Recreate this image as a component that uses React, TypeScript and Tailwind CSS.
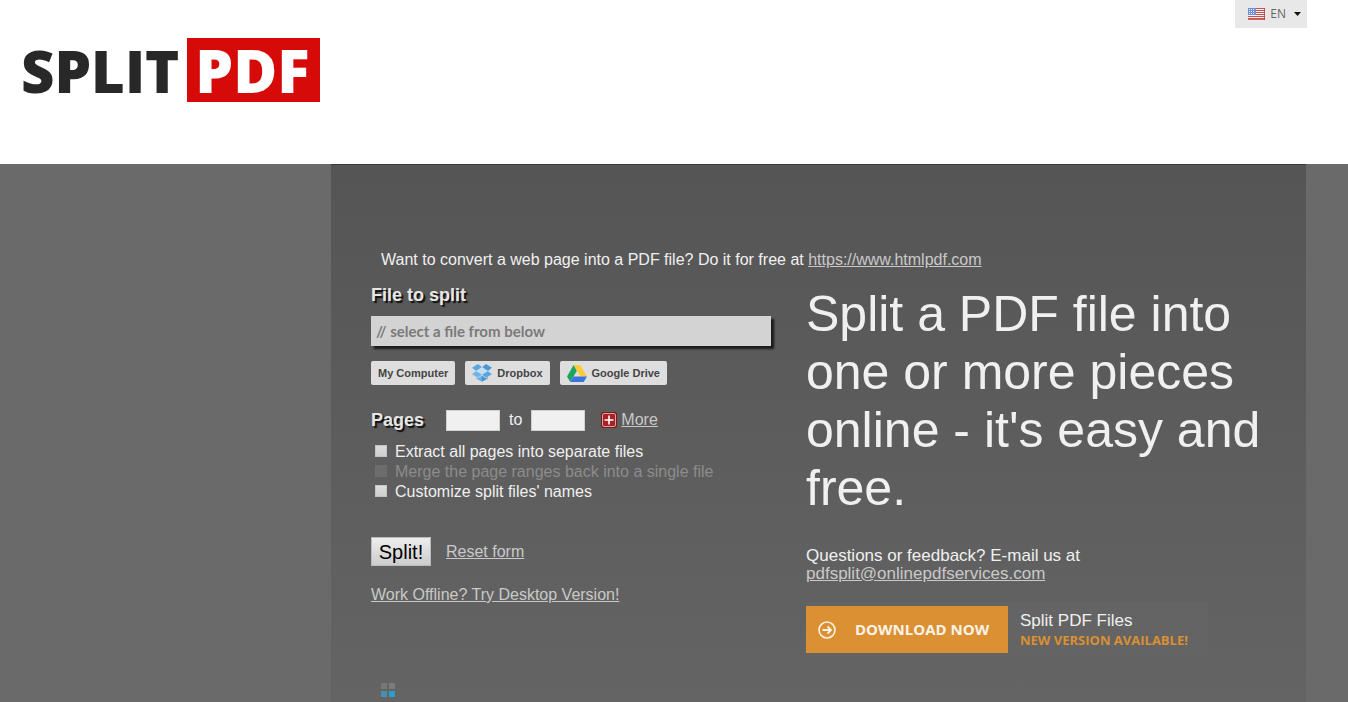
import React, { useState } from "react";

const linkClass = "text-[#c9c9c9] underline";
const fileButtonClass =
  "flex h-6 items-center rounded-[2px] bg-[#dedede] px-[7px] text-[11px] font-bold text-[#444]";
const tickClass =
  "mt-[3px] h-3 w-3 shrink-0 appearance-none border border-[#c4c4c4] bg-linear-to-b from-[#dcdcdc] to-[#cfcfcf] checked:bg-[#3a8fd0] checked:bg-none disabled:border-[#6e6e6e] disabled:from-[#6c6c6c] disabled:to-[#6c6c6c]";

function Logo() {
  return (
    <a href="/" className="flex items-baseline gap-2 font-['Open_Sans',sans-serif] leading-16 font-extrabold">
      <span className="text-[58px] text-[#282828]">SPLIT</span>
      <span className="bg-[#d60b09] pr-[10px] pl-2 text-[60px] text-white">PDF</span>
    </a>
  );
}

function FlagIcon() {
  return (
    <svg width="17" height="12" viewBox="0 0 17 12" aria-hidden="true">
      <rect width="17" height="12" fill="#f4f0f0" />
      <path d="M0 .5h17M0 2.5h17M0 4.5h17M0 6.5h17M0 8.5h17M0 10.5h17" stroke="#c8504e" />
      <path d="M0 11.5h17M16.5 0v12" stroke="#a33" strokeOpacity=".7" />
      <rect width="8" height="7" fill="#7391d6" />
      <path d="M1 1.5h6M1 3.5h6M1 5.5h6" stroke="#dfe7fa" strokeDasharray="1 1" />
    </svg>
  );
}

function DropboxIcon() {
  return (
    <svg width="20" height="18" viewBox="0 0 20 18" aria-hidden="true">
      <path d="M6 0 10 3.3 4.2 7 0 3.8Z" fill="#5ba6df" />
      <path d="M14 0 10 3.3 15.8 7 20 3.8Z" fill="#4b97d6" />
      <path d="M0 10.2 4.2 7 10 10.6 6 13.8Z" fill="#6db4e8" />
      <path d="M20 10.2 15.8 7 10 10.6 14 13.8Z" fill="#5aa5df" />
      <path d="M10 3.3 15.8 7 10 10.6 4.2 7Z" fill="#c3dff5" />
      <path d="M4.2 13.2 6 14.6 10 11.4v6.4L4.2 14.5Z" fill="#64ade4" />
      <path d="M15.8 13.2 14 14.6l-4-3.2v6.4l5.8-3.3Z" fill="#4593d2" />
    </svg>
  );
}

function DriveIcon() {
  return (
    <svg width="20" height="17" viewBox="0 0 20 17" aria-hidden="true">
      <path d="M6.6 0 0 11.4 3.3 17 9.9 5.7Z" fill="#1da462" />
      <path d="M6.6 0h6.6L20 11.4h-6.6Z" fill="#fdcb35" />
      <path d="M6.6 11.4H20L16.7 17H3.3Z" fill="#3b72dc" />
    </svg>
  );
}

function PlusIcon() {
  return (
    <svg width="16" height="16" viewBox="0 0 16 16" aria-hidden="true">
      <rect width="16" height="16" rx="2" fill="#7c191c" />
      <rect x="1.5" y="1.5" width="13" height="13" rx="1.5" fill="#a81f24" stroke="#d9a5a5" />
      <path d="M8 3.5v9M3.5 8h9" stroke="#fff" strokeWidth="1.6" />
    </svg>
  );
}

function SplitForm() {
  const [extract, setExtract] = useState(false);
  const [names, setNames] = useState(false);
  return (
    <form className="w-[400px] shrink-0" onSubmit={(e) => e.preventDefault()}>
      <label htmlFor="file" className="block text-lg leading-5 font-bold text-[#e6e6e6] [text-shadow:2px_2px_1px_#111]">
        File to split
      </label>
      <input
        id="file"
        readOnly
        placeholder="// select a file from below"
        className="mt-[11px] block h-[30px] w-full bg-[#d3d3d3] px-[5px] font-['Lato',sans-serif] text-[15px] font-bold shadow-[3px_3px_2px_#1a1a1a] placeholder:text-[#7a7a7a]"
      />
      <div className="mt-[15px] flex gap-2.5">
        <button type="button" className={fileButtonClass}>My Computer</button>
        <button type="button" className={`${fileButtonClass} gap-[5px]`}><DropboxIcon />Dropbox</button>
        <button type="button" className={`${fileButtonClass} gap-[5px]`}><DriveIcon />Google Drive</button>
      </div>
      <div className="mt-6 flex h-[22px] items-center">
        <span className="w-[75px] text-lg font-bold text-[#e6e6e6] [text-shadow:2px_2px_1px_#111]">Pages</span>
        <input aria-label="First page" className="h-[21px] w-[54px] border border-[#d0d0d0] bg-[#f0f0f0] px-1 text-black" />
        <label htmlFor="last" className="px-[9px]">to</label>
        <input id="last" className="h-[21px] w-[54px] border border-[#d0d0d0] bg-[#f0f0f0] px-1 text-black" />
        <a href="#more" className="ml-4 flex items-center gap-1 text-[#c9c9c9]">
          <PlusIcon />
          <span className="underline">More</span>
        </a>
      </div>
      <div className="mt-[11px] flex flex-col pl-1 leading-5">
        <label className="flex gap-2">
          <input type="checkbox" className={tickClass} checked={extract} onChange={(e) => setExtract(e.target.checked)} />
          Extract all pages into separate files
        </label>
        <label className="flex gap-2 text-[#8c8c8c]">
          <input type="checkbox" className={tickClass} disabled />
          Merge the page ranges back into a single file
        </label>
        <label className="flex gap-2">
          <input type="checkbox" className={tickClass} checked={names} onChange={(e) => setNames(e.target.checked)} />
          Customize split files' names
        </label>
      </div>
      <div className="mt-[35px] flex items-center gap-[15px]">
        <button type="submit" className="h-[29px] w-[60px] border border-[#bbb] bg-linear-to-b from-[#eee] to-[#ccc] text-xl leading-6 text-black">
          Split!
        </button>
        <a href="#reset" className={linkClass}>Reset form</a>
      </div>
      <a href="#desktop" className={`mt-5 inline-block leading-[18px] ${linkClass}`}>Work Offline? Try Desktop Version!</a>
      <div className="mt-[76px] ml-2.5 grid w-[14px] grid-cols-2 gap-0.5">
        <span className="h-1.5 bg-[#777]" />
        <span className="h-1.5 bg-[#7b7b7b]" />
        <span className="h-1.5 bg-[#4790ad]" />
        <span className="h-1.5 bg-[#2e9dcb]" />
      </div>
    </form>
  );
}

function Pitch() {
  return (
    <section className="min-w-0 flex-1">
      <h1 className="text-[50px] leading-[58px] text-[#f0f0f0]">
        Split a PDF file into one or more pieces online - it's easy and free.
      </h1>
      <p className="mt-[30px] text-[17px] leading-[18px]">
        Questions or feedback? E-mail us at
        <br />
        <a href="mailto:pdfsplit@onlinepdfservices.com" className={linkClass}>pdfsplit@onlinepdfservices.com</a>
      </p>
      <a href="#download" className="mt-[19px] flex max-w-[402px] items-center bg-[#646464]">
        <span className="flex h-[47px] w-[202px] items-center gap-[19px] bg-[#da9033] pl-3 font-['Open_Sans',sans-serif] text-[15px] font-bold text-[#fbf3e6]">
          <svg width="18" height="18" viewBox="0 0 18 18" fill="none" stroke="currentColor" aria-hidden="true">
            <circle cx="9" cy="9" r="8" strokeWidth="1.6" />
            <path d="M4.5 9h8.5M9.5 5.5 13 9l-3.5 3.5" strokeWidth="1.8" />
          </svg>
          DOWNLOAD NOW
        </span>
        <span className="flex flex-col py-2 pl-3">
          <span className="text-[17px] leading-[22px]">Split PDF Files</span>
          <span className="font-['Open_Sans',sans-serif] text-[13px] leading-[17px] font-bold text-[#da9033]">NEW VERSION AVAILABLE!</span>
        </span>
      </a>
    </section>
  );
}

export default function App() {
  return (
    <div className="flex min-h-screen flex-col bg-[#6a6a6a] font-['Liberation_Sans',Arial,sans-serif] text-base text-[#f0f0f0]">
      <header className="flex h-[164px] shrink-0 items-start justify-between bg-white pr-[41px] pl-[21px]">
        <div className="pt-[38px]"><Logo /></div>
        <button type="button" aria-haspopup="listbox" className="flex h-7 items-center bg-[#e8e8e8] pr-[6px] pl-[13px] font-['Open_Sans',sans-serif] text-xs text-[#666]">
          <FlagIcon />
          <span className="pr-2 pl-[5px]">EN</span>
          <svg width="7" height="4" viewBox="0 0 7 4" fill="#111" aria-hidden="true"><path d="M0 0h7L3.5 4Z" /></svg>
        </button>
      </header>
      <main className="flex flex-1 pr-[42px] pl-[331px]">
        <div className="flex-1 border-t border-[#3a3a3a] bg-linear-to-b from-[#555] to-[#646464] pt-[86px] pr-10 pl-10">
          <p className="pl-2.5 leading-[18px]">
            Want to convert a web page into a PDF file? Do it for free at{" "}
            <a href="https://www.htmlpdf.com" className={linkClass}>https://www.htmlpdf.com</a>
          </p>
          <div className="mt-4 flex gap-[35px]">
            <SplitForm />
            <Pitch />
          </div>
        </div>
      </main>
    </div>
  );
}
